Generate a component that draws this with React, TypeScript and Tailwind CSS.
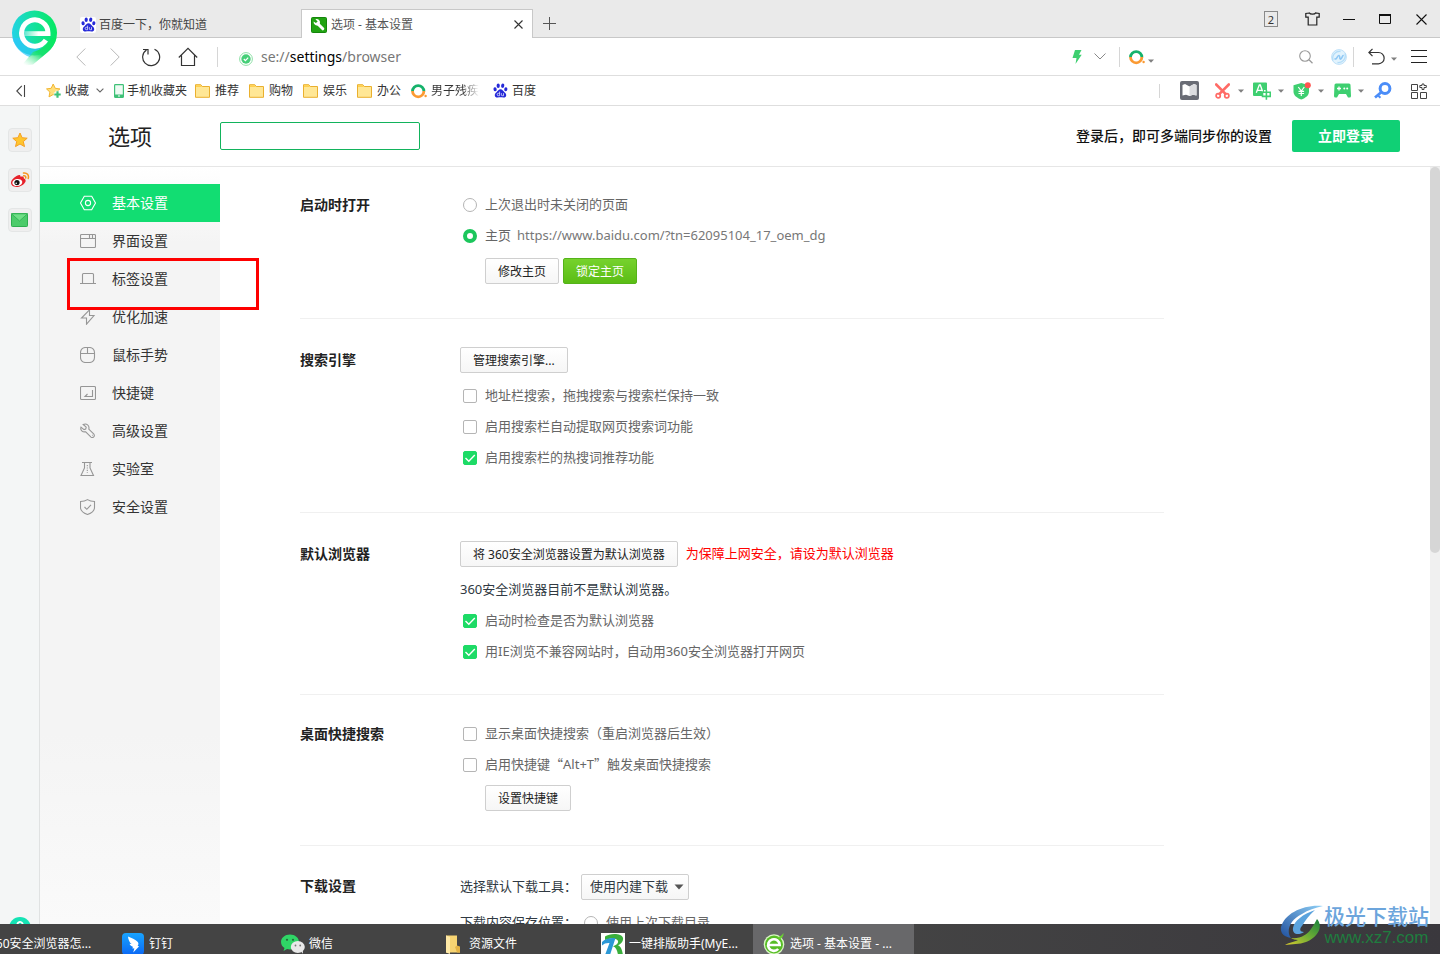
import React, { useState } from "react";
import type { ReactNode } from "react";

/* ---------- small shared icons ---------- */

function Caret() {
  return (
    <svg width="6" height="4" viewBox="0 0 6 4" aria-hidden="true">
      <path d="M0 0.5h6L3 3.8z" fill="#808080" />
    </svg>
  );
}

function PawIcon() {
  return (
    <svg width="15" height="15" viewBox="0 0 15 15" aria-hidden="true">
      <g fill="#2529d8">
        <ellipse cx="2.1" cy="6.3" rx="1.6" ry="2" transform="rotate(-12 2.1 6.3)" />
        <ellipse cx="5.2" cy="2.7" rx="1.6" ry="2.2" />
        <ellipse cx="9.7" cy="2.7" rx="1.6" ry="2.2" transform="rotate(10 9.7 2.7)" />
        <ellipse cx="12.8" cy="6.3" rx="1.6" ry="2" transform="rotate(10 12.8 6.3)" />
        <path d="M7.5 6.2c1.8 0 2.6 1.6 3.7 2.7 1.2 1.100 2.200 2 2 3.500-.2 1.500-1.300 2.200-2.800 2.100-1-.1-1.900-.3-2.900-.3s-1.900.2-2.900.3c-1.500.1-2.600-.6-2.800-2.100-.2-1.500.8-2.400 2-3.500C4.900 7.800 5.700 6.200 7.500 6.200z" />
      </g>
      <path d="M6.600 8.600v4.100H5.400a1.200 1.200 0 010-2.400h1.200M8.400 10.200v1.600q0 .9.9.9h1.200v-2.500" fill="none" stroke="#fff" strokeWidth="0.7" />
    </svg>
  );
}

function FolderIcon() {
  return (
    <svg width="15" height="14" viewBox="0 0 15 14" aria-hidden="true">
      <path d="M0.500 0.700h5.300l1.400 1.800h7.300v10.800h-14z" fill="#ffe796" stroke="#eab02e" />
      <path d="M1 1.200h4.600l1.200 1.700H1z" fill="#ffd04f" />
    </svg>
  );
}

function QIcon() {
  return (
    <svg width="16" height="16" viewBox="0 0 16 16" aria-hidden="true">
      <path d="M1.500 8.300a5.700 5.700 0 0111.400 0" fill="none" stroke="#15b26b" strokeWidth="2.800" />
      <path d="M12.900 8.300a5.700 5.700 0 01-11.400 0" fill="none" stroke="#fb9a33" strokeWidth="2.800" transform="translate(0 -.2)" />
      <circle cx="14.600" cy="13" r="1.200" fill="#fb9a33" />
    </svg>
  );
}

function BrandLogo() {
  return (
    <svg width="48" height="58" viewBox="0 0 48 58" aria-hidden="true">
      <defs>
        <linearGradient id="pin" x1="0" y1="0.600" x2="1" y2="0.500">
          <stop offset="0" stopColor="#22d2e8" />
          <stop offset="0.450" stopColor="#16e0a4" />
          <stop offset="1" stopColor="#06e962" />
        </linearGradient>
        <linearGradient id="tail" x1="1" y1="0" x2="0.150" y2="1">
          <stop offset="0" stopColor="#05ea60" />
          <stop offset="0.550" stopColor="#17e070" />
          <stop offset="1" stopColor="#7ff0b0" stopOpacity="0" />
        </linearGradient>
        <linearGradient id="bar" x1="0" y1="0" x2="1" y2="0">
          <stop offset="0" stopColor="#fff" stopOpacity="0.300" />
          <stop offset="0.600" stopColor="#fff" />
        </linearGradient>
      </defs>
      <circle cx="23.500" cy="23" r="22.500" fill="url(#pin)" />
      <path d="M1.500 28c2 9 9 16 17 19l12-9-18-10z" fill="#2cc6fb" opacity="0.700" />
      <path d="M45.500 28c-1.500 6-4.500 10.500-8.500 14L22 54.500l-12 1.500 12-14c8-2 15-7 18-14z" fill="url(#tail)" />
      <path d="M13 21.200h24v4.800H13z" fill="url(#bar)" />
      <path d="M37 25.900v-3a13.200 13.200 0 10-2.100 7.300" fill="none" stroke="#fff" strokeWidth="5" />
    </svg>
  );
}

/* ---------- window chrome ---------- */

function Slot({ w, label, children }: { w: string; label: string; children: ReactNode }) {
  return (
    <button type="button" aria-label={label} className={`${w} flex h-full shrink-0 items-center justify-center`}>
      {children}
    </button>
  );
}

function TabBar() {
  return (
    <header className="flex h-[38px] shrink-0 items-stretch bg-[#eaeaea] pl-[70px] shadow-[inset_0_-1px_0_#c8c8c8]">
      <div className="flex w-[231px] items-center gap-[3px] pt-[11px] pl-[10px] text-xs text-[#444]">
        <span className="flex h-4 w-4 items-center justify-center rounded-xs bg-white">
          <PawIcon />
        </span>
        <a href="#baidu">百度一下，你就知道</a>
      </div>
      <div className="mt-[9px] flex w-[232px] items-center gap-1 border border-b-0 border-[#c8c8c8] bg-white pt-px pr-2 pl-[9px] text-xs text-[#555]">
        <svg width="16" height="16" viewBox="0 0 16 16" aria-hidden="true">
          <rect x="0.500" y="0.500" width="15" height="15" rx="1" fill="#21a312" stroke="#15850c" />
          <path d="M6.500 6.500l5.300 5.300" stroke="#fff" strokeWidth="3" strokeLinecap="round" />
          <path d="M2.600 4.600l2.700 1.700 1.300-1.900-2.200-2.200a3.500 3.500 0 014.400 4.600L6.800 8.400a3.500 3.500 0 01-4.200-3.800z" fill="#fff" />
        </svg>
        <a href="#settings" className="flex-1">选项 - 基本设置</a>
        <button type="button" aria-label="关闭标签" className="p-px">
          <svg width="9" height="9" viewBox="0 0 9 9"><path d="M0.500 0.500l8 8M8.500 0.500l-8 8" stroke="#333" strokeWidth="1.100" /></svg>
        </button>
      </div>
      <div className="pt-[9px]">
        <Slot w="w-8" label="新建标签">
          <svg width="13" height="13" viewBox="0 0 13 13"><path d="M6.500 0v13M0 6.500h13" stroke="#555" /></svg>
        </Slot>
      </div>
      <div className="ml-auto flex items-center">
        <Slot w="w-11" label="窗口数量">
          <span className="flex h-4 w-[14px] items-center justify-center border border-[#8a8a8a] text-[11px] leading-none text-[#333]">2</span>
        </Slot>
        <Slot w="w-[38px]" label="皮肤">
          <svg width="15" height="14" viewBox="0 0 15 14"><path d="M4.500 1L0.800 1.500v3.700h2.400v7.800h8.600V5.200h2.400V1.500L10.500 1c-.5 1.600-5.500 1.600-6 0z" fill="none" stroke="#222" strokeWidth="1.200" /></svg>
        </Slot>
        <Slot w="w-9" label="最小化">
          <svg width="12" height="12" viewBox="0 0 12 12"><path d="M0 6.500h12" stroke="#111" /></svg>
        </Slot>
        <Slot w="w-9" label="最大化">
          <svg width="12" height="10" viewBox="0 0 12 10"><path d="M0.500 1v8.500h11V1" fill="none" stroke="#111" /><path d="M0 1h12" stroke="#111" strokeWidth="2" /></svg>
        </Slot>
        <Slot w="w-[37px]" label="关闭">
          <svg width="11" height="11" viewBox="0 0 11 11"><path d="M0.500 0.500l10 10M10.500 0.500l-10 10" stroke="#111" strokeWidth="1.100" /></svg>
        </Slot>
      </div>
    </header>
  );
}

function AddressBar() {
  return (
    <div className="flex h-[38px] shrink-0 items-center border-b border-[#dedede] bg-white pl-[63px]">
      <Slot w="w-9" label="后退">
        <svg width="10" height="18" viewBox="0 0 10 18"><path d="M9.300 0.500L0.800 9l8.500 8.500" fill="none" stroke="#b8b8b8" /></svg>
      </Slot>
      <Slot w="w-8" label="前进">
        <svg width="10" height="18" viewBox="0 0 10 18"><path d="M0.700 0.500L9.200 9l-8.500 8.500" fill="none" stroke="#b8b8b8" /></svg>
      </Slot>
      <Slot w="w-10" label="刷新">
        <svg width="20" height="20" viewBox="0 0 20 20"><path d="M5.500 3A8.500 8.500 0 1013.500 2.300" fill="none" stroke="#333" strokeWidth="1.200" /><path d="M2 2.500h5v5" fill="none" stroke="#333" strokeWidth="1.200" /></svg>
      </Slot>
      <Slot w="w-[34px]" label="主页">
        <svg width="20" height="20" viewBox="0 0 20 20"><path d="M0.800 10.500L10 1.300l9.200 9.200M3.500 8.500v10h13v-10" fill="none" stroke="#333" strokeWidth="1.200" /></svg>
      </Slot>
      <span className="ml-3 h-5 w-px bg-[#d6d6d6]" />
      <svg className="mt-1 ml-[21px] shrink-0" width="14" height="14" viewBox="0 0 14 14" aria-hidden="true">
        <circle cx="7" cy="7" r="6.400" fill="none" stroke="#8ee0a6" />
        <circle cx="7" cy="7" r="4.700" fill="#45cf77" />
        <path d="M4.800 7l1.600 1.600 2.800-3" fill="none" stroke="#fff" strokeWidth="1.200" />
      </svg>
      <a href="#settings" className="ml-2 min-w-0 flex-1 text-sm text-[#777]">
        se://<span className="text-black">settings</span>/browser
      </a>
      <Slot w="w-[18px]" label="极速模式">
        <svg width="10" height="14" viewBox="0 0 10 14"><path d="M3 0h6.500L7 4.800h2.700L3.500 14l1-6H0.500z" fill="#3ecf70" /></svg>
      </Slot>
      <Slot w="w-7" label="展开地址">
        <svg width="12" height="7" viewBox="0 0 12 7"><path d="M0.500 0.500L6 6l5.500-5.500" fill="none" stroke="#888" /></svg>
      </Slot>
      <span className="mr-[7px] ml-[5px] h-5 w-px bg-[#d6d6d6]" />
      <Slot w="w-5" label="搜索引擎"><QIcon /></Slot>
      <span className="flex w-2 justify-center pt-2"><Caret /></span>
      <input aria-label="搜索" className="h-6 w-[132px] bg-transparent text-xs outline-none" />
      <Slot w="w-[38px]" label="搜索">
        <svg width="15" height="14" viewBox="0 0 15 14"><circle cx="6" cy="6" r="5.300" fill="none" stroke="#999" strokeWidth="1.100" /><path d="M10 9.800l3.500 3.400" stroke="#999" strokeWidth="1.200" /></svg>
      </Slot>
      <Slot w="w-7" label="网络助手">
        <svg width="16" height="16" viewBox="0 0 16 16"><circle cx="8" cy="8" r="7.400" fill="#e2f3fd" stroke="#bfe0f8" /><path d="M2 11.500C0.500 6 5 1.800 9.500 2.500M14 4.500c1.500 5.500-3 9.700-7.500 9" fill="none" stroke="#b2dcf8" strokeWidth="1.300" /><path d="M3.500 9.500c2 2.200 3-3.500 4.500-3s0 4.200 1.800 3.500 1-4 2.900-3.200" fill="none" stroke="#8fc8f5" strokeWidth="1.600" /></svg>
      </Slot>
      <span className="mr-[10px] h-5 w-px bg-[#d6d6d6]" />
      <Slot w="w-[25px]" label="恢复">
        <svg width="17" height="17" viewBox="0 0 17 17"><path d="M1 4.500h9.500a5.500 5.500 0 010 11.300H4M4.500 0.800L0.900 4.500l3.600 3.700" fill="none" stroke="#333" strokeWidth="1.200" /></svg>
      </Slot>
      <span className="flex w-[9px] justify-center pt-1"><Caret /></span>
      <Slot w="w-[42px]" label="菜单">
        <svg width="16" height="13" viewBox="0 0 16 13"><path d="M0 0.500h16M0 6.500h16M0 12.500h16" stroke="#222" /></svg>
      </Slot>
    </div>
  );
}

function ToolSlot({ label, children }: { label: string; children: ReactNode }) {
  return (
    <button type="button" aria-label={label} className="flex h-full w-10 shrink-0 items-center">
      <span className="flex w-6 justify-center pl-[2px]">{children}</span>
      <span className="flex w-4 justify-center pt-px"><Caret /></span>
    </button>
  );
}

const folders = ["推荐", "购物", "娱乐", "办公"];

function BookmarkBar() {
  return (
    <div className="flex h-[30px] shrink-0 items-center border-b border-[#dedede] bg-white text-xs text-[#333]">
      <div className="w-[46px]">
        <button type="button" aria-label="收起书签" className="ml-4 block">
          <svg width="10" height="12" viewBox="0 0 10 12"><path d="M5.800 0.800L0.800 6l5 5.200M8.500 0v12" fill="none" stroke="#444" strokeWidth="1.100" /></svg>
        </button>
      </div>
      <div className="mr-2 flex items-center gap-[10px]">
        <button type="button" className="flex items-center gap-[3px]">
          <svg width="16" height="16" viewBox="0 0 16 16"><path d="M7.200 1l2 4.300 4.700.6-3.500 3.200.9 4.800-4.100-2.400L3 13.900l.9-4.800L0.500 5.900l4.700-.6z" fill="#ffdf7c" stroke="#f2b632" /><path d="M11.500 7.800v7.400M7.800 11.500h7.400" stroke="#fff" strokeWidth="4" /><path d="M11.500 8.300v6.400M8.300 11.500h6.400" stroke="#3fc177" strokeWidth="2.200" /></svg>
          收藏
          <svg className="ml-1" width="8" height="5" viewBox="0 0 8 5"><path d="M0.600 0.600L4 4l3.400-3.400" fill="none" stroke="#666" strokeWidth="1.100" /></svg>
        </button>
        <a href="#mobile" className="flex items-center gap-[3px]">
          <svg width="10" height="14" viewBox="0 0 10 14"><rect x="0.600" y="0.600" width="8.800" height="12.800" rx="0.800" fill="#eefaf3" stroke="#3fc177" strokeWidth="1.200" /><path d="M0.500 10.500h9v3h-9z" fill="#3fc177" /><path d="M4 12h2" stroke="#fff" /></svg>
          手机收藏夹
        </a>
      </div>
      <div className="flex items-center gap-[10px]">
        {folders.map((name) => (
          <a key={name} href="#folder" className="flex items-center gap-[5px]"><FolderIcon />{name}</a>
        ))}
        <a href="#so" className="flex items-center gap-1">
          <QIcon />
          <span className="w-12 bg-linear-to-r from-[#333] from-65% to-white bg-clip-text text-transparent">男子残疾</span>
        </a>
        <a href="#baidu" className="ml-1 flex items-center gap-1"><PawIcon />百度</a>
      </div>
      <div className="ml-auto flex h-full items-center">
        <span className="mr-[9px] h-[14px] w-px bg-[#d6d6d6]" />
        <Slot w="w-10" label="小说">
          <svg width="19" height="19" viewBox="0 0 19 19"><rect width="19" height="19" rx="2" fill="#696c75" /><path d="M2.500 4l2.500-1 4.500 2.500v9.500l-3.500-1.200-3.500.7zM16.500 4L14 3 9.500 5.500V15l3.500-1.200 3.500.7z" fill="#fff" /><path d="M9.500 5.500V15l3.500-1.200 3.500.7V4L14 3z" fill="#dcdde0" /></svg>
        </Slot>
        <ToolSlot label="截图">
          <svg width="15" height="16" viewBox="0 0 15 16"><path d="M1.200 1.500l9.300 9.300M13.800 1.500L4.500 10.800" stroke="#ff6b66" strokeWidth="2.600" strokeLinecap="round" /><circle cx="3.200" cy="12.700" r="2.100" fill="none" stroke="#ff6b66" strokeWidth="1.700" /><circle cx="11.800" cy="12.700" r="2.100" fill="none" stroke="#ff6b66" strokeWidth="1.700" /></svg>
        </ToolSlot>
        <ToolSlot label="翻译">
          <svg width="18" height="18" viewBox="0 0 18 18"><path d="M0 1.500Q0 0.500 1 0.500h12q1 0 1 1V8h-3v6H1q-1 0-1-1z" fill="#3ecf70" /><path d="M3.300 10.800L6.300 3h1l2.300 6.500M4.300 8.300h4.600" fill="none" stroke="#fff" strokeWidth="1.300" /><path d="M9.500 10.200h7.800v4.200H9.500zM13.400 8v9.800" fill="#fff" stroke="#3ecf70" strokeWidth="1.600" /></svg>
        </ToolSlot>
        <ToolSlot label="网购">
          <svg width="18" height="18" viewBox="0 0 18 18"><path d="M8.300 1l7.700 2.300v6.200c0 4-3.500 6.500-7.700 8C4 16 0.500 13.500 0.500 9.500V3.300z" fill="#3ecf70" /><path d="M5.300 5l3 4 3-4M8.300 9v5M5.500 9.300h5.600M5.500 11.500h5.600" fill="none" stroke="#fff" strokeWidth="1.200" /><circle cx="14.800" cy="3.300" r="3" fill="#ff5450" /></svg>
        </ToolSlot>
        <ToolSlot label="游戏">
          <svg width="17" height="15" viewBox="0 0 17 15"><path d="M2 0.500h13q1.500 0 1.500 1.500l.5 11q0 1.500-1.500 1.500h-1.500L12 11H5l-2 3.500H1.500Q0 14.500 0 13L0.500 2Q0.500 0.500 2 0.500z" fill="#3ecf70" /><path d="M5 3.500v4M3 5.500h4" stroke="#fff" strokeWidth="1.300" /><circle cx="10.300" cy="5.500" r="1" fill="#fff" /><circle cx="13.200" cy="5.500" r="1" fill="#fff" /></svg>
        </ToolSlot>
        <Slot w="w-7" label="密码">
          <svg width="18" height="17" viewBox="0 0 18 17"><circle cx="11" cy="6.500" r="4.900" fill="none" stroke="#4b8df8" strokeWidth="3" /><path d="M7.500 10L1 15.500" stroke="#4b8df8" strokeWidth="2.800" /><path d="M4 13.500l2.500 2.200" stroke="#4b8df8" strokeWidth="2" /></svg>
        </Slot>
        <Slot w="w-[43px]" label="扩展">
          <svg width="16" height="16" viewBox="0 0 16 16"><g fill="none" stroke="#444"><path d="M0.500 1.500h6v6h-6zM0.500 9.500h6v6h-6zM9.500 9.500h6v6h-6z" /><path d="M11 1h2v1.500h2.300v2H13V6.500h-2v-2H8.800v-2H11z" /></g></svg>
        </Slot>
      </div>
    </div>
  );
}

/* ---------- left dock ---------- */

function DockButton({ label, children }: { label: string; children: ReactNode }) {
  return (
    <button type="button" aria-label={label} className="flex h-6 w-6 shrink-0 items-center justify-center rounded-sm border border-[#e4e6e6] bg-[#efefef]">
      {children}
    </button>
  );
}

function Dock() {
  return (
    <aside className="flex w-10 shrink-0 flex-col items-center gap-4 overflow-hidden border-r border-[#e0e2e2] bg-[#f4f6f6] pt-[22px]">
      <DockButton label="收藏">
        <svg className="shrink-0" width="16" height="16" viewBox="0 0 16 16"><path d="M8 1l2.100 4.700 5.100.5-3.900 3.400 1.200 5L8 12l-4.500 2.600 1.200-5L0.800 6.200l5.100-.5z" fill="#ffc52d" stroke="#f5a022" strokeLinejoin="round" /></svg>
      </DockButton>
      <DockButton label="微博">
        <svg className="shrink-0" width="20" height="16" viewBox="0 0 20 16"><path d="M7.500 3.500c1.500-1 3.300-.5 3 1.200 2-.7 3.800-.2 3.200 1.600 5 2-0.500 8.700-7 8.700C3 15 1 13 1 10.800 1 8 5 4.500 7.500 3.500z" fill="#e6212a" /><ellipse cx="7.300" cy="10.500" rx="5" ry="3.500" fill="#fff" transform="rotate(-8 7.300 10.500)" /><circle cx="7" cy="10.600" r="2.600" fill="#111" /><circle cx="6.200" cy="11.300" r="0.800" fill="#fff" /><path d="M13.500 1c3.500-.7 5.800 2.400 4.700 5.500M13.700 3.800c1.500-.3 2.400.9 2 2.200" fill="none" stroke="#f7941d" strokeWidth="1.500" strokeLinecap="round" /></svg>
      </DockButton>
      <DockButton label="邮件">
        <svg className="shrink-0" width="17" height="14" viewBox="0 0 17 14"><rect x="0.500" y="0.500" width="16" height="13" rx="0.800" fill="#4ccb6a" stroke="#2fae50" /><path d="M0.500 0.800h16L8.500 8z" fill="#6fdf86" stroke="#2fae50" strokeWidth="0.800" /></svg>
      </DockButton>
      <button type="button" aria-label="帮助" className="mt-auto -mb-[15px] h-[22px] w-[22px] shrink-0">
        <svg width="22" height="22" viewBox="0 0 22 22"><circle cx="11" cy="11" r="11" fill="#14e3b4" /><path d="M8.300 7.500a2.700 2.700 0 115 1.500c-.8 1-2.300 1.500-2.300 3" fill="none" stroke="#fff" strokeWidth="1.800" /></svg>
      </button>
    </aside>
  );
}

/* ---------- settings navigation ---------- */

const navItems: { label: string; icon: ReactNode; marked?: boolean }[] = [
  { label: "基本设置", icon: <><path d="M4.300 1.200h7.400L15.500 8l-3.800 6.800H4.300L0.500 8z" /><circle cx="8" cy="8" r="2.600" /></> },
  { label: "界面设置", icon: <><rect x="0.500" y="1.500" width="15" height="13" rx="1" /><path d="M0.500 5.500h15M9.500 1.500v4M12.500 1.500v4" /></> },
  { label: "标签设置", icon: <path d="M2.500 12.500v-9q0-1 1-1h9q1 0 1 1v9M0 12.500h16" />, marked: true },
  { label: "优化加速", icon: <path d="M9.500 0.800L1.500 9h5v6.200L14 6.500H9.500z" /> },
  { label: "鼠标手势", icon: <><rect x="0.500" y="0.500" width="14" height="15" rx="5" /><path d="M0.500 6.500h14M7.500 0.500v6" /></> },
  { label: "快捷键", icon: <><rect x="0.500" y="1.500" width="15" height="13" rx="1" /><path d="M12.500 5v6.500H5l2.500-2.500M5 11.500h2" /></> },
  { label: "高级设置", icon: <path d="M3.200 1.500l3 2.700-.5 1.800-1.700.6-3-2.500c-1 3 1.500 5.300 4.700 4.700l5.300 5.300q1.500 1 2.700-.2 1.200-1.300.2-2.700L8.800 6.200C9.800 2.500 6.500 0 3.200 1.500zM12 12.300h.8" /> },
  { label: "实验室", icon: <><path d="M2 1.500h10M4.500 1.500v5.500L1 14.500h12.500L10 7V1.500" /><path d="M7.300 4v8" strokeDasharray="1.200 1.200" /></> },
  { label: "安全设置", icon: <><path d="M7.500 0.600c2 1.200 4.500 1.800 7 1.900v6c0 3.500-3.500 5.800-7 7-3.500-1.200-7-3.500-7-7v-6c2.500-.1 5-.7 7-1.900z" /><path d="M4.500 8l2.300 2.300 4.200-4.500" /></> },
];

function SettingsNav() {
  const [active, setActive] = useState("基本设置");
  return (
    <nav className="w-[180px] shrink-0 bg-[linear-gradient(#fff,#f4f4f4_10%,#f4f4f4_75%,#fafafa)] pt-[17px]">
      <ul>
        {navItems.map((item) => {
          const on = item.label === active;
          return (
            <li key={item.label} className="relative">
              <button
                type="button"
                onClick={() => setActive(item.label)}
                className={`flex h-[38px] w-full items-center gap-4 pl-10 text-sm ${on ? "bg-[#12dd72] text-white" : "text-[#333]"}`}
              >
                <svg width="16" height="16" viewBox="0 0 16 16" fill="none" stroke={on ? "#fff" : "#969696"} strokeWidth="1.1" aria-hidden="true">
                  {item.icon}
                </svg>
                {item.label}
              </button>
              {item.marked && (
                <div className="pointer-events-none absolute -top-[2px] left-[27px] z-10 h-[52px] w-48 border-3 border-[#fe0000]" />
              )}
            </li>
          );
        })}
      </ul>
    </nav>
  );
}

/* ---------- form controls ---------- */

function Check({ id, label, on = false }: { id: string; label: ReactNode; on?: boolean }) {
  return (
    <div className="flex h-[31px] items-center gap-2 pl-[3px]">
      <span className="relative flex h-[14px] w-[14px]">
        <input id={id} type="checkbox" defaultChecked={on} className="peer h-[14px] w-[14px] appearance-none rounded-xs border border-[#b5b5b5] bg-white checked:border-[#1ddb66] checked:bg-[#1ddb66]" />
        <svg className="pointer-events-none absolute inset-0 hidden peer-checked:block" width="14" height="14" viewBox="0 0 14 14">
          <path d="M2.500 7l3.300 3.300 6-6.300" fill="none" stroke="#fff" strokeWidth="1.400" />
        </svg>
      </span>
      <label htmlFor={id} className="text-[13px] text-[#666]">{label}</label>
    </div>
  );
}

function Radio({ id, name, label, on = false }: { id: string; name: string; label: ReactNode; on?: boolean }) {
  return (
    <div className="flex h-[31px] items-center gap-2 pl-[3px]">
      <input id={id} name={name} type="radio" defaultChecked={on} className="h-[14px] w-[14px] appearance-none rounded-full border border-[#b5b5b5] bg-white checked:border-4 checked:border-[#1cc65c]" />
      <label htmlFor={id} className="text-[13px] text-[#666]">{label}</label>
    </div>
  );
}

function PlainButton({ children }: { children: ReactNode }) {
  return (
    <button type="button" className="h-[26px] rounded-xs border border-[#cfcfcf] bg-linear-to-b from-white to-[#f6f6f6] px-3 pt-[2px] text-xs text-[#222]">
      {children}
    </button>
  );
}

function Section({ title, titleHeight, space, children }: { title: string; titleHeight: string; space: string; children: ReactNode }) {
  return (
    <section className={`flex border-b border-[#f0f0f0] ${space}`}>
      <h2 className={`w-40 shrink-0 text-sm font-bold text-[#222] ${titleHeight}`}>{title}</h2>
      <div className="min-w-0 flex-1">{children}</div>
    </section>
  );
}

function SettingsContent() {
  return (
    <main className="min-w-0 flex-1 overflow-hidden pl-20">
      <div className="max-w-[864px]">
        <Section title="启动时打开" titleHeight="leading-[31px]" space="pt-[22px] pb-[34px]">
          <Radio id="start-last" name="startup" label="上次退出时未关闭的页面" />
          <Radio
            id="start-home"
            name="startup"
            on
            label={<>主页<span className="ml-[6px] text-[#777]">https://www.baidu.com/?tn=62095104_17_oem_dg</span></>}
          />
          <div className="mt-[7px] flex gap-1 pl-[25px]">
            <PlainButton>修改主页</PlainButton>
            <button type="button" className="h-[26px] rounded-xs border border-[#55b31a] bg-linear-to-b from-[#76d22d] to-[#5bbd14] px-3 pt-[2px] text-xs text-white">锁定主页</button>
          </div>
        </Section>

        <Section title="搜索引擎" titleHeight="leading-[26px]" space="pt-7 pb-[39px]">
          <div className="mb-[7px] flex"><PlainButton>管理搜索引擎...</PlainButton></div>
          <Check id="search-sync" label="地址栏搜索，拖拽搜索与搜索栏保持一致" />
          <Check id="search-extract" label="启用搜索栏自动提取网页搜索词功能" />
          <Check id="search-hot" on label="启用搜索栏的热搜词推荐功能" />
        </Section>

        <Section title="默认浏览器" titleHeight="leading-[26px]" space="pt-7 pb-[27px]">
          <div className="mb-[7px] flex items-center gap-2 text-[13px] text-[#ff0000]">
            <PlainButton>将 360安全浏览器设置为默认浏览器</PlainButton>
            为保障上网安全，请设为默认浏览器
          </div>
          <p className="text-[13px] leading-[31px] text-[#303942]">360安全浏览器目前不是默认浏览器。</p>
          <Check id="default-check" on label="启动时检查是否为默认浏览器" />
          <Check id="default-ie" on label="用IE浏览不兼容网站时，自动用360安全浏览器打开网页" />
        </Section>

        <Section title="桌面快捷搜索" titleHeight="leading-[31px]" space="pt-[23px] pb-[34px]">
          <Check id="desk-show" label="显示桌面快捷搜索（重启浏览器后生效）" />
          <Check
            id="desk-key"
            label={
              <>
                启用快捷键<span className="font-['Noto_Sans_CJK_SC',sans-serif]">“</span>Alt+T
                <span className="font-['Noto_Sans_CJK_SC',sans-serif]">”</span>触发桌面快捷搜索
              </>
            }
          />
          <div className="mt-[5px] flex pl-[25px]"><PlainButton>设置快捷键</PlainButton></div>
        </Section>

        <Section title="下载设置" titleHeight="leading-[24px]" space="pt-7 pb-7">
          <div className="mb-[7px] flex items-center gap-1 text-[13px] text-[#303942]">
            <label htmlFor="tool">选择默认下载工具：</label>
            <div className="relative">
              <select id="tool" className="h-[26px] w-[108px] appearance-none rounded-xs border border-[#cfcfcf] bg-linear-to-b from-white to-[#f6f6f6] pl-2">
                <option>使用内建下载</option>
              </select>
              <svg className="pointer-events-none absolute top-[10px] right-[5px]" width="10" height="6" viewBox="0 0 10 6"><path d="M0.500 0.500h9L5 5.500z" fill="#555" /></svg>
            </div>
          </div>
          <div className="flex items-center gap-1 text-[13px] text-[#303942]">
            <span>下载内容保存位置：</span>
            <Radio id="dir-last" name="dir" label="使用上次下载目录" />
          </div>
        </Section>
      </div>
    </main>
  );
}

/* ---------- taskbar ---------- */

const tasks: { label: string; icon: ReactNode; active?: boolean }[] = [
  { label: "360安全浏览器怎...", icon: null },
  {
    label: "钉钉",
    icon: (
      <svg width="22" height="22" viewBox="0 0 22 22"><defs><linearGradient id="ding" x1="0" y1="0" x2="0" y2="1"><stop stopColor="#18a4ff" /><stop offset="1" stopColor="#0b68f5" /></linearGradient></defs><rect width="22" height="22" rx="4" fill="url(#ding)" /><path d="M6 3.500c4 1.500 8 3.500 9.800 5.500 1 1.200.7 2.700-.2 4l1.600.3-6 6.200 1.200-4-2.300-.3 1-1.300c-2-.7-3.200-1.800-3.500-3.200l2 .4C7.500 9.500 6.200 6.500 6 3.500z" fill="#fff" /></svg>
    ),
  },
  {
    label: "微信",
    icon: (
      <svg width="24" height="20" viewBox="0 0 24 20"><path d="M9 0.500c5 0 9 3.300 9 7.500s-4 7.500-9 7.500c-1 0-2-.1-3-.4L2.500 17l1-3C1.300 12.600 0 10.500 0 8 0 3.800 4 0.500 9 0.500z" fill="#2fd566" /><ellipse cx="16.800" cy="13" rx="7" ry="6" fill="#e8e8e8" /><path d="M20 17.500l2 2.300-.2-3.300z" fill="#e8e8e8" /><g fill="#256b3d"><circle cx="6" cy="5.800" r="1.100" /><circle cx="12" cy="5.800" r="1.100" /></g><g fill="#777"><circle cx="14.500" cy="11.500" r="0.900" /><circle cx="19.200" cy="11.500" r="0.900" /></g></svg>
    ),
  },
  {
    label: "资源文件",
    icon: (
      <svg width="14" height="20" viewBox="0 0 14 20"><path d="M0 1.500h11v12l3 1.500v3.500H0z" fill="#f7d472" /><path d="M0 1.500l4 1.500v17l-4-1.500z" fill="#ffe9a6" /><path d="M9 13l2-1.500 3 1v6h-3z" fill="#e5b445" /></svg>
    ),
  },
  {
    label: "一键排版助手(MyE...",
    icon: (
      <svg width="24" height="22" viewBox="0 0 24 22"><path d="M0 0h24v22H0z" fill="#fff" /><path d="M4 3.500C9 0 21 0 22 5c.6 3.500-2 6-5 7.200 3 1.300 4 4.300 5 9.800h-5c-.7-5-2-7.500-5-8.800 4-1.500 5.500-3.200 5-5.200C16.300 5 10 4.500 4 7z" fill="#3aaf3c" /><path d="M1 9c3-3.500 8-4.500 13.500-4L9 22H4l4.500-12C5.500 9.800 3 10.500 1 12.500z" fill="#2b98d6" /></svg>
    ),
  },
  {
    label: "选项 - 基本设置 - ...",
    active: true,
    icon: (
      <svg width="22" height="22" viewBox="0 0 22 22"><circle cx="11" cy="11.500" r="10.300" fill="#d9f5c4" /><circle cx="11" cy="11.500" r="9" fill="#57bd25" /><path d="M5 12h11.700a5.800 5.800 0 10-1.500 4" fill="none" stroke="#fff" strokeWidth="2.600" /><path d="M14 4.500C17 3.500 19 2 20.500 0c.3 3-1.500 5.500-4 6z" fill="#6bd033" /></svg>
    ),
  },
];

function Taskbar() {
  return (
    <footer className="flex h-[30px] shrink-0 overflow-hidden bg-linear-to-r from-[#444] from-60% to-[#3a383d] text-xs text-white">
      <div className="-ml-[47px] flex">
        {tasks.map((t) => (
          <button key={t.label} type="button" className={`flex w-40 items-center gap-1 pt-[9px] pl-2 whitespace-nowrap ${t.active ? "w-[161px] bg-[#68686a] pl-[9px]" : ""}`}>
            <span className="flex w-6 shrink-0 justify-center">{t.icon}</span>
            {t.label}
          </button>
        ))}
      </div>
    </footer>
  );
}

function Watermark() {
  return (
    <div className="pointer-events-none absolute right-[11px] bottom-[6px] flex items-center">
      <svg width="44" height="42" viewBox="0 0 44 42" aria-hidden="true">
        <defs>
          <linearGradient id="wmBlue" x1="0" y1="1" x2="1" y2="0"><stop stopColor="#1f4f9d" /><stop offset="1" stopColor="#8fd0f7" /></linearGradient>
          <linearGradient id="wmGreen" x1="0" y1="1" x2="1" y2="0"><stop stopColor="#d8c92e" /><stop offset="0.500" stopColor="#6fae35" /><stop offset="1" stopColor="#17803c" /></linearGradient>
        </defs>
        <path d="M43 1C24-1 5 8 1 22c-1 6 3 10 10 11C6 27 9 15 22 9c6-4 13-6 21-8z" fill="url(#wmBlue)" />
        <path d="M35 5c-12 4-21 11-22 18-1 6 5 8 11 4-4 0-5-3-2-6 3-5 7-11 13-16z" fill="#5ba3dd" />
        <path d="M37 14c7 8 0 19-11 23-7 2.500-14 2-21 3 5-3 9-3 13-5-3 0-5-1-7-2 9 1 16-3 20-9 2-3 4-6 6-10z" fill="url(#wmGreen)" />
      </svg>
      <div className="flex flex-col items-center">
        <span className="text-[21px] leading-6 font-medium text-[#6ca5dc]">极光下载站</span>
        <span className="font-['Liberation_Sans',sans-serif] text-[17px] leading-5 text-[#1f7d3f]">www.xz7.com</span>
      </div>
    </div>
  );
}

export default function App() {
  return (
    <div className="relative flex h-screen flex-col overflow-hidden bg-white font-['Noto_Sans','Noto_Sans_CJK_SC',sans-serif]">
      <TabBar />
      <AddressBar />
      <BookmarkBar />
      <div className="flex min-h-0 flex-1">
        <Dock />
        <div className="flex min-w-0 flex-1 flex-col">
          <div className="flex h-[61px] shrink-0 items-center border-b border-[#e6e6e6] pr-10 pl-[68px]">
            <h1 className="w-28 text-[22px] text-[#222]">选项</h1>
            <input aria-label="搜索设置" className="h-7 w-[200px] rounded-xs border border-[#12b35c] px-2 text-sm outline-none" />
            <p className="ml-auto text-sm font-medium text-[#111]">登录后，即可多端同步你的设置</p>
            <button type="button" className="ml-5 h-8 w-[108px] rounded-xs bg-[#10d075] text-sm font-bold text-white">立即登录</button>
          </div>
          <div className="flex min-h-0 flex-1">
            <SettingsNav />
            <SettingsContent />
            <div className="w-[10px] shrink-0 bg-[#f0f0f0]">
              <div className="h-[51%] rounded-full bg-[#d6d6d6]" />
            </div>
          </div>
        </div>
      </div>
      <Taskbar />
      <div className="pointer-events-none absolute top-[10px] left-[11px]">
        <BrandLogo />
      </div>
      <Watermark />
    </div>
  );
}
